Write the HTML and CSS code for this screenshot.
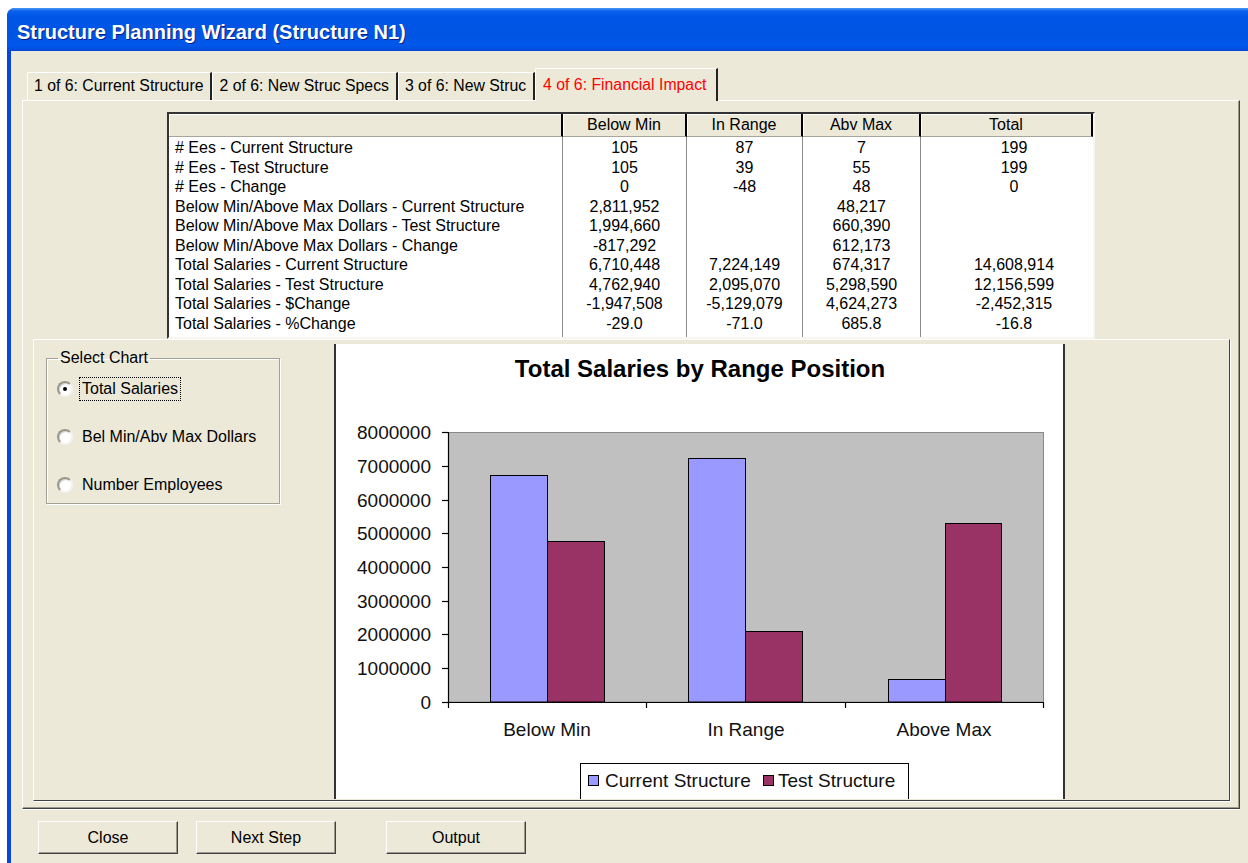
FILE: index.html
```html
<!DOCTYPE html>
<html lang="en">
<head>
<meta charset="utf-8">
<title>Structure Planning Wizard</title>
<link rel="stylesheet" href="styles.css">
</head>
<body>
<div class="window">
  <div class="titlebar">Structure Planning Wizard (Structure N1)</div>
  <div class="client">
    <div class="tabs">
      <div class="tab">1 of 6: Current Structure</div>
      <div class="tab">2 of 6: New Struc Specs</div>
      <div class="tab">3 of 6: New Struc</div>
      <div class="tab active">4 of 6: Financial Impact</div>
    </div>

    <div class="panel">
      <div class="grid">
        <div class="col col-label">
          <div class="hd"></div>
          <div class="cells">
            <div># Ees - Current Structure</div>
            <div># Ees - Test Structure</div>
            <div># Ees - Change</div>
            <div>Below Min/Above Max Dollars - Current Structure</div>
            <div>Below Min/Above Max Dollars - Test Structure</div>
            <div>Below Min/Above Max Dollars - Change</div>
            <div>Total Salaries - Current Structure</div>
            <div>Total Salaries - Test Structure</div>
            <div>Total Salaries - $Change</div>
            <div>Total Salaries - %Change</div>
          </div>
        </div>
        <div class="col col-below">
          <div class="hd">Below Min</div>
          <div class="cells">
            <div>105</div>
            <div>105</div>
            <div>0</div>
            <div>2,811,952</div>
            <div>1,994,660</div>
            <div>-817,292</div>
            <div>6,710,448</div>
            <div>4,762,940</div>
            <div>-1,947,508</div>
            <div>-29.0</div>
          </div>
        </div>
        <div class="col col-range">
          <div class="hd">In Range</div>
          <div class="cells">
            <div>87</div>
            <div>39</div>
            <div>-48</div>
            <div></div>
            <div></div>
            <div></div>
            <div>7,224,149</div>
            <div>2,095,070</div>
            <div>-5,129,079</div>
            <div>-71.0</div>
          </div>
        </div>
        <div class="col col-above">
          <div class="hd">Abv Max</div>
          <div class="cells">
            <div>7</div>
            <div>55</div>
            <div>48</div>
            <div>48,217</div>
            <div>660,390</div>
            <div>612,173</div>
            <div>674,317</div>
            <div>5,298,590</div>
            <div>4,624,273</div>
            <div>685.8</div>
          </div>
        </div>
        <div class="col col-total">
          <div class="hd">Total</div>
          <div class="cells">
            <div>199</div>
            <div>199</div>
            <div>0</div>
            <div></div>
            <div></div>
            <div></div>
            <div>14,608,914</div>
            <div>12,156,599</div>
            <div>-2,452,315</div>
            <div>-16.8</div>
          </div>
        </div>
      </div>

      <div class="lower">
        <fieldset class="group">
          <legend>Select Chart</legend>
          <label class="option"><span class="radio checked"></span><span class="caption focus">Total Salaries</span></label>
          <label class="option"><span class="radio"></span><span class="caption">Bel Min/Abv Max Dollars</span></label>
          <label class="option"><span class="radio"></span><span class="caption">Number Employees</span></label>
        </fieldset>

        <div class="chart">
          <svg width="727" height="455" viewBox="336 344 727 455">
            <text class="chart-title" x="700" y="377" text-anchor="middle">Total Salaries by Range Position</text>

            <!-- plot area -->
            <rect x="448.5" y="432.5" width="595" height="269.5" fill="#C0C0C0" stroke="#8A8A8A"/>

            <!-- value axis labels -->
            <g class="axis-label" text-anchor="end">
              <text x="431" y="439">8000000</text>
              <text x="431" y="473">7000000</text>
              <text x="431" y="507">6000000</text>
              <text x="431" y="540">5000000</text>
              <text x="431" y="574">4000000</text>
              <text x="431" y="608">3000000</text>
              <text x="431" y="641">2000000</text>
              <text x="431" y="675">1000000</text>
              <text x="431" y="709">0</text>
            </g>

            <!-- bars: current structure / test structure -->
            <g stroke="#000" stroke-width="1">
              <rect x="490.5" y="475.5" width="57" height="226.5" fill="#9999FF"/>
              <rect x="547.5" y="541.5" width="57" height="160.5" fill="#993366"/>
              <rect x="688.5" y="458.5" width="57" height="243.5" fill="#9999FF"/>
              <rect x="745.5" y="631.5" width="57" height="70.5" fill="#993366"/>
              <rect x="888.5" y="679.5" width="57" height="22.5" fill="#9999FF"/>
              <rect x="945.5" y="523.5" width="56" height="178.5" fill="#993366"/>
            </g>

            <!-- axes and tick marks -->
            <g stroke="#000" stroke-width="1.2">
              <line x1="448.5" y1="432" x2="448.5" y2="702.5"/>
              <line x1="448" y1="702.5" x2="1044" y2="702.5"/>
              <line x1="442" y1="432.5" x2="448" y2="432.5"/>
              <line x1="442" y1="466.5" x2="448" y2="466.5"/>
              <line x1="442" y1="500.5" x2="448" y2="500.5"/>
              <line x1="442" y1="533.5" x2="448" y2="533.5"/>
              <line x1="442" y1="567.5" x2="448" y2="567.5"/>
              <line x1="442" y1="601.5" x2="448" y2="601.5"/>
              <line x1="442" y1="634.5" x2="448" y2="634.5"/>
              <line x1="442" y1="668.5" x2="448" y2="668.5"/>
              <line x1="442" y1="702.5" x2="448" y2="702.5"/>
              <line x1="448.5" y1="702" x2="448.5" y2="708"/>
              <line x1="646.5" y1="702" x2="646.5" y2="708"/>
              <line x1="845.5" y1="702" x2="845.5" y2="708"/>
              <line x1="1043.5" y1="702" x2="1043.5" y2="708"/>
            </g>

            <!-- category labels -->
            <g class="axis-label" text-anchor="middle">
              <text x="547" y="736">Below Min</text>
              <text x="746" y="736">In Range</text>
              <text x="944" y="736">Above Max</text>
            </g>

            <!-- legend -->
            <rect x="580.5" y="763.5" width="328" height="45" fill="#fff" stroke="#000"/>
            <rect x="588.5" y="775.5" width="10" height="10" fill="#9999FF" stroke="#000"/>
            <text class="axis-label" x="605" y="787">Current Structure</text>
            <rect x="763.5" y="775.5" width="10" height="10" fill="#993366" stroke="#000"/>
            <text class="axis-label" x="778" y="787">Test Structure</text>
          </svg>
        </div>
      </div>
    </div>

    <div class="buttons">
      <button class="btn">Close</button>
      <button class="btn">Next Step</button>
      <button class="btn btn-output">Output</button>
    </div>
  </div>
</div>
</body>
</html>
```

FILE: styles.css
```css
* {
  box-sizing: border-box;
}

html,
body {
  margin: 0;
}

body {
  width: 1248px;
  height: 863px;
  overflow: hidden;
  background: #fff;
  font-family: "Liberation Sans", Arial, sans-serif;
  color: #000;
}

/* ---------- window frame ---------- */

.window {
  margin: 8px 0 0 7px;
  height: 855px;
  display: flex;
  flex-direction: column;
  background: #0845DA;
  border-top-left-radius: 8px;
  overflow: hidden;
}

.titlebar {
  height: 43px;
  padding: 6px 0 0 10px;
  line-height: 37px;
  font-size: 20px;
  font-weight: bold;
  color: #fff;
  white-space: nowrap;
  text-shadow: 1px 1px 0 #0A1F8A;
  background: linear-gradient(180deg,
    #4C9AF7 0px,
    #0A61EA 3px,
    #0056E6 8px,
    #0054E3 28px,
    #0059EB 37px,
    #0049D8 43px);
}

.client {
  flex: 1;
  margin-left: 4px;
  background: #ECE9D8;
}

/* ---------- tabs ---------- */

.tabs {
  display: flex;
  align-items: flex-end;
  height: 49px;
  padding: 16px 0 0 16px;
}

.tab {
  height: 28px;
  line-height: 26px;
  padding: 0 7px 0 6px;
  font-size: 15.8px;
  white-space: nowrap;
  background: #ECE9D8;
  border-top: 1px solid #fff;
  border-left: 1px solid #fff;
  border-right: 2px solid #222;
  border-top-left-radius: 2px;
}

.tab.active {
  position: relative;
  z-index: 1;
  height: 33px;
  padding: 3px 10px 0 7px;
  margin-bottom: -1px;
  color: #FF0000;
}

/* ---------- tab page ---------- */

.panel {
  margin-left: 11px;
  width: 1218px;
  height: 709px;
  padding: 11px 0 0 144px;
  border-top: 1px solid #fff;
  border-left: 1px solid #fff;
  border-right: 1px solid #404040;
  border-bottom: 1px solid #404040;
  box-shadow: inset -1px -1px 0 #9C9A8F, 0 1px 0 #fff;
}

/* ---------- results grid ---------- */

.grid {
  display: flex;
  width: 928px;
  height: 227px;
  border: 2px solid;
  border-color: #333 #F7F6F0 #F7F6F0 #333;
  font-size: 16px;
}

.col {
  display: flex;
  flex-direction: column;
}

.col-label { width: 394px; }
.col-below { width: 124px; }
.col-range { width: 116px; }
.col-above { width: 118px; }
.col-total { width: 172px; }

.hd {
  height: 23px;
  line-height: 22px;
  text-align: center;
  white-space: nowrap;
  background: #ECE9D8;
  border-right: 2px solid #000;
  border-bottom: 1px solid #A8A69C;
  box-shadow: inset 1px 1px 0 #fff;
}

.cells {
  flex: 1;
  padding-top: 1px;
  background: #fff;
  border-right: 1px solid #8C8C8C;
}

.col-total .cells {
  border-right: none;
  padding-left: 14px;
}

.cells div {
  height: 19.5px;
  line-height: 19.5px;
  text-align: center;
  white-space: nowrap;
}

.col-label .cells div {
  text-align: left;
  padding-left: 6px;
}

/* ---------- chart area ---------- */

.lower {
  display: flex;
  align-items: flex-start;
  height: 462px;
  margin: 0 9px 0 -134px;
  border: 1px solid;
  border-color: #fff #404040 #404040 #fff;
  box-shadow: 1px 1px 0 #fff;
}

.group {
  margin: 9px 0 0 12px;
  width: 234px;
  height: 155px;
  min-width: 0;
  padding: 0 0 0 10px;
  border: 1px solid #A3A196;
  box-shadow: inset 1px 1px 0 #fff, 1px 1px 0 #fff;
  font-size: 16px;
}

.group legend {
  margin-left: 1px;
  padding: 0 2px;
  line-height: 18px;
}

.option {
  display: flex;
  align-items: center;
  gap: 7px;
  height: 24px;
  margin-top: 24px;
  white-space: nowrap;
}

.option:first-of-type {
  margin-top: 10px;
}

.radio {
  position: relative;
  flex: none;
  width: 16px;
  height: 16px;
  border-radius: 50%;
  background: #fff;
  border: 2px solid;
  border-color: #9A988D #F4F3EE #F4F3EE #9A988D;
  box-shadow: inset 1px 1px 0 #D8D6CC;
}

.radio.checked::after {
  content: "";
  position: absolute;
  left: 4px;
  top: 4px;
  width: 4px;
  height: 4px;
  border-radius: 50%;
  background: #000;
}

.caption {
  padding: 0 2px;
  line-height: 22px;
}

.caption.focus {
  outline: 1px dotted #000;
  outline-offset: 0;
}

.chart {
  flex: none;
  margin: 4px 0 0 54px;
  width: 731px;
  height: 455px;
  background: #fff;
  border-left: 2px solid #333;
  border-right: 2px solid #333;
  overflow: hidden;
}

.chart svg {
  display: block;
}

.chart text {
  font-family: "Liberation Sans", Arial, sans-serif;
}

.chart-title {
  font-size: 24px;
  font-weight: bold;
}

.axis-label {
  font-size: 19px;
  fill: #111;
}

/* ---------- command buttons ---------- */

.buttons {
  display: flex;
  gap: 18px;
  padding: 12px 0 0 27px;
}

.btn {
  width: 140px;
  height: 33px;
  padding: 0;
  font-family: "Liberation Sans", Arial, sans-serif;
  font-size: 16px;
  color: #000;
  background: #ECE9D8;
  border: 1px solid;
  border-color: #fff #404040 #404040 #fff;
  box-shadow: inset -1px -1px 0 #9C9A8F;
}

.btn-output {
  margin-left: 32px;
}
```
